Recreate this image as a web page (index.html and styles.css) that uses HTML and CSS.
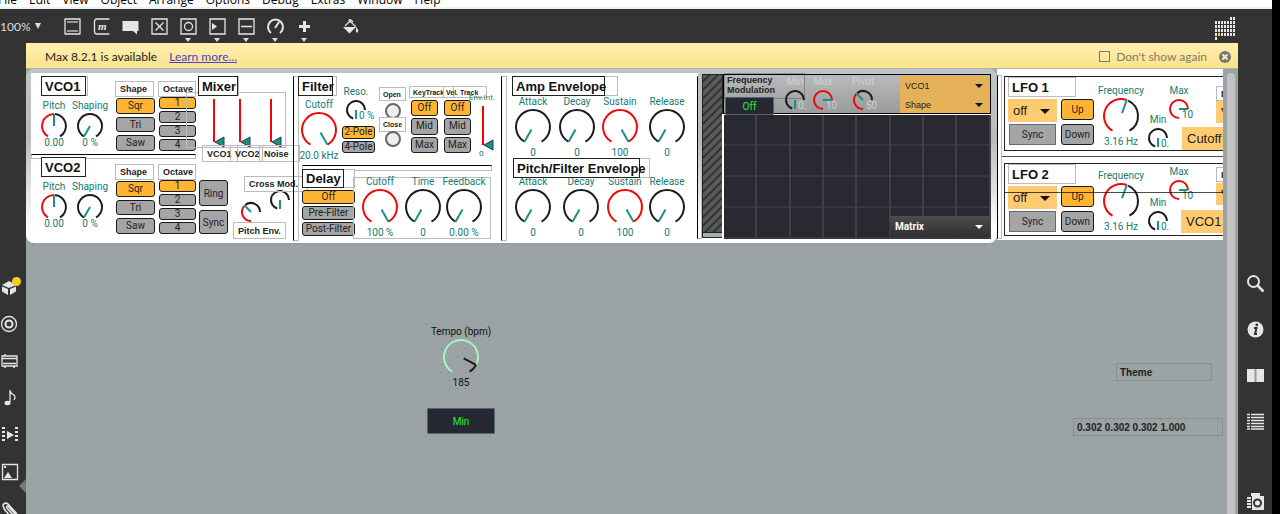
FILE: index.html
```html
<!DOCTYPE html>
<html lang="en">
<head>
<meta charset="utf-8">
<title>Max</title>
<link rel="stylesheet" href="styles.css">
</head>
<body>
<div class="window">
  <nav class="menubar">
    <button>File</button><button>Edit</button><button>View</button><button>Object</button><button>Arrange</button><button>Options</button><button>Debug</button><button>Extras</button><button>Window</button><button>Help</button>
  </nav>

  <header class="toolbar">
    <button class="zoom">100%<svg width="8" height="6" viewBox="0 0 8 6"><path d="M1 0h6L4 6z" fill="#e0e0e0"/></svg></button>
    <div class="tools">
      <button aria-label="Object"><svg viewBox="0 0 17 17"><path d="M1 .5v16M16 .5v16M1 1h15M1 16h15"/><path d="M3 4h11M3 13h11" stroke="#999" stroke-width="2"/></svg></button>
      <button aria-label="Message"><svg viewBox="0 0 17 17"><path d="M16.500 1H4Q1.500 1 1.500 3.500v10Q1.500 16 4 16h12.500"/><text x="5" y="12" class="glyph">m</text></svg></button>
      <button aria-label="Comment"><svg viewBox="0 0 17 17"><path d="M.5 3h16v10H15v3.500L11 13H.5z" class="solid"/></svg></button>
      <button aria-label="Toggle"><svg viewBox="0 0 17 17"><path d="M1 1h15v15H1zM4.500 4.500l8 8M12.500 4.500l-8 8"/></svg></button>
      <button aria-label="Button" class="more"><svg viewBox="0 0 17 17"><path d="M1 1h15v15H1z"/><circle cx="8.500" cy="8.500" r="4"/></svg></button>
      <button aria-label="Number" class="more"><svg viewBox="0 0 17 17"><path d="M1 1h15v15H1z"/><path d="M3 5l5 3.500L3 12z" class="solid"/></svg></button>
      <button aria-label="Slider" class="more"><svg viewBox="0 0 17 17"><path d="M1 1h15v15H1zM3 8.500h11"/></svg></button>
      <button aria-label="Dial" class="more"><svg viewBox="0 0 17 17"><path d="M4 15A7.500 7.500 0 1 1 13 15M8 10l4-6" stroke-width="2"/></svg></button>
      <button aria-label="Add" class="more"><svg viewBox="0 0 17 17"><path d="M8.500 3v11M3 8.500h11" stroke-width="3"/></svg></button>
      <button aria-label="Format" class="format"><svg viewBox="0 0 17 17"><path d="M7 5V3q0-2 2-1l2 2M3 8l5-5 6 6" stroke-width="1.200"/><path d="M1 9h13l-6.500 6.500zM14 9q3 3 2 5-1 1-2 0z" class="solid"/></svg></button>
    </div>
    <button class="grid-toggle" aria-label="Clue grid"><svg width="20" height="23" viewBox="0 0 20 23">
      <g stroke-width="3" stroke-dasharray="2 1" fill="none"><path d="M15 1.500h5M0 5.500h20M0 9.500h20M0 13.500h20M0 17.500h20M0 21.500h2"/></g><path d="M3 16h2v3H3z" fill="#f2cf1d" stroke="none"/></svg></button>
  </header>

  <div class="body">
    <aside class="left-bar">
      <button aria-label="Packages"><svg viewBox="0 0 20 20"><path d="M1 8l7-4 7 4-7 3zM1 9.500l6 2.500v6l-6-3.500zM15 9.500L9 12v6l6-3.500z" class="solid"/><circle cx="15.500" cy="4.500" r="4.500" fill="#f2cf1d" stroke="none"/></svg></button>
      <button aria-label="Audio"><svg viewBox="0 0 20 20"><circle cx="8" cy="10" r="7.500"/><circle cx="8" cy="10" r="3.500" stroke-width="2"/></svg></button>
      <button aria-label="Devices"><svg viewBox="0 0 20 20"><path d="M1 5h15v10H1zM1 7.500h15M2 12.500h13M3 4h2M3 16h2M12 16h2"/></svg></button>
      <button aria-label="Sounds"><svg viewBox="0 0 20 20"><path d="M9 2v12M9 3q1 3 4 4 2 2 0 5"/><ellipse cx="6.500" cy="15" rx="3" ry="2.200" class="solid"/></svg></button>
      <button aria-label="Video"><svg viewBox="0 0 20 20"><path d="M2.500 2v16M15.500 2v16" stroke-width="3" stroke-dasharray="2 2"/><path d="M6 6l7 4-7 4z" class="solid"/></svg></button>
      <button aria-label="Images"><svg viewBox="0 0 20 20"><path d="M1.500 2.500h15v15h-15z"/><path d="M3 16l4-6 4 6zM3 4h2v2H3z" class="solid"/></svg></button>
      <button aria-label="Clips"><svg viewBox="0 0 20 20"><path d="M11 19L4 11q-2-3-2-5 2-3 5-1l9 10M14 18L6 9q-1-2 1-2l9 10" stroke-width="1.600"/></svg></button>
      <span class="drawer-arrow"></span>
    </aside>

    <main class="main">
      <div class="notice">
        <span>Max 8.2.1 is available</span><a href="#">Learn more...</a>
        <label class="dismiss"><input type="checkbox">Don't show again</label>
        <button class="close" aria-label="Close"><svg width="12" height="12" viewBox="0 0 12 12"><circle cx="6" cy="6" r="6" fill="#777"/><path d="M3.500 3.500l5 5M8.500 3.500l-5 5" stroke="#ffedad" stroke-width="2"/></svg></button>
      </div>
      <div class="patcher">
        <div class="canvas" id="canvas"></div>
        <div class="gutter"><div class="thumb"></div></div>
      </div>
    </main>

    <aside class="right-bar">
      <button aria-label="Search"><svg viewBox="0 0 17 17"><circle cx="6.500" cy="6.500" r="5.500" stroke-width="2"/><path d="M10.500 10.500l6 6" stroke-width="2.500"/></svg></button>
      <button aria-label="Inspector"><svg viewBox="0 0 17 17"><circle cx="8.500" cy="8.500" r="8" class="solid"/><path d="M7 7h2.500L8 13h2" stroke="#333" stroke-width="2"/><circle cx="9.800" cy="3.800" r="1.400" fill="#333" stroke="none"/></svg></button>
      <button aria-label="Reference"><svg viewBox="0 0 17 17"><path d="M0 2h8v13H0zM9 2h8v13H9z" class="solid"/><path d="M8.500 2v13" stroke="#999" stroke-width="2"/></svg></button>
      <button aria-label="Console"><svg viewBox="0 0 17 17"><path d="M0 1.500h3M4 1.500h13M0 4.500h3M4 4.500h13M0 7.500h3M4 7.500h13M0 10.500h3M4 10.500h13M0 13.500h3M4 13.500h13M0 16h3M4 16h13" stroke-width="1.700"/></svg></button>
      <button aria-label="Snapshots" class="last"><svg viewBox="0 0 17 17"><path d="M4 0h9v3h4v14H5V3H4zM0 4h4v2H0zM0 7h4v2H0zM0 10h4v2H0zM0 13h4v2H0z" class="solid"/><circle cx="10.500" cy="10" r="3.500" fill="#eee" stroke="#333" stroke-width="2"/></svg></button>
    </aside>
  </div>
</div>
<script src="patch.js"></script>
</body>
</html>
```

FILE: styles.css
```css
* { box-sizing: border-box; }
body { margin: 0; background: #000; height: 100vh; overflow: hidden; font-family: Lato, sans-serif; font-size: 12px; }
button, input, select { font: inherit; color: inherit; margin: 0; padding: 0; }
button { background: none; border: 0; white-space: nowrap; }
svg { display: block; overflow: visible; }

.window { margin-right: 8px; height: 100vh; background: #333; display: flex; flex-direction: column; overflow: hidden; }
.menubar { height: 9px; flex: none; background: #fff; border-bottom: 2px solid #f0f0f0; display: flex; align-items: flex-end; gap: 12px; overflow: hidden; font: 12px/14px "Open Sans", sans-serif; color: #000; }
.menubar button { height: 14px; flex: none; }
.menubar button:first-child { margin-left: -2px; }

.toolbar { height: 34px; flex: none; display: flex; align-items: center; color: #ddd; padding-right: 37px; }
.toolbar svg, .left-bar svg, .right-bar svg { fill: none; stroke: #e6e6e6; stroke-width: 1.3; }
.toolbar .solid, .left-bar .solid, .right-bar .solid { fill: #e6e6e6; stroke: none; }
.glyph { font: italic bold 11px "Liberation Serif", serif; fill: #e6e6e6; stroke: none; }
.zoom { width: 58px; display: flex; align-items: center; gap: 3px; }
.toolbar .zoom svg { stroke: none; }
.tools { display: flex; flex: 1; }
.tools button { width: 29px; height: 34px; display: flex; justify-content: center; align-items: center; position: relative; }
.tools svg { width: 17px; height: 17px; }
.tools .format { margin-left: 17px; }
.more::after { content: ""; position: absolute; bottom: 1px; left: 11px; border: 3px solid transparent; border-top: 4px solid #ddd; border-bottom: 0; }
.grid-toggle { padding-top: 4px; }

.body { flex: 1; display: flex; min-height: 0; }
.left-bar { width: 26px; flex: none; padding-top: 225px; overflow: hidden; position: relative; }
.left-bar button { display: flex; width: 26px; height: 37px; align-items: center; padding-left: 1px; }
.left-bar svg { width: 20px; height: 20px; }
.drawer-arrow { position: absolute; right: 0; top: 436px; border: 7px solid transparent; border-right-color: #777; border-left: 0; }
.right-bar { width: 34px; flex: none; padding-top: 217px; overflow: hidden; }
.right-bar button { display: flex; width: 34px; height: 46px; align-items: center; justify-content: center; }
.right-bar svg { width: 17px; height: 17px; }
.right-bar .last { margin-top: 34px; }

.main { flex: 1; min-width: 0; display: flex; flex-direction: column; }
.notice { height: 26px; flex: none; display: flex; align-items: center; padding: 2px 7px 0 19px; color: #222; background: linear-gradient(#ffefb2, #fbe38b); border-bottom: 1px solid #b5b5b0; }
.notice a { margin-left: 12px; color: #4a3fd0; }
.dismiss { margin-left: auto; display: flex; align-items: center; color: #807c68; }
.dismiss input { appearance: none; width: 11px; height: 11px; border: 1px solid #777; margin-right: 6px; }
.close { margin-left: 12px; }

.patcher { flex: 1; display: flex; min-height: 0; background: #9ba3a4; }
.canvas { flex: 1; min-width: 0; position: relative; overflow: hidden; background: conic-gradient(at 1px 1px, transparent 75%, #788081 0) 7px 7px / 8px 8px; font-family: Roboto, sans-serif; font-size: 10px; }
.gutter { width: 15px; flex: none; padding: 4px 3px 0 4px; }
.thumb { height: 100%; background: #c3c1c2; border-radius: 4px 4px 0 0; }

.obj { position: absolute; }
.back { background: linear-gradient(#bfc4c5, #b8bcbd 40%, #fff 92%); border-radius: 8px; }
.white { background: #fff; }
.frame { border: 1px solid #bbb; }
.over { border: 1px solid rgba(60, 60, 60, .35); }
.box { border: 1px solid #222; }
.rule { border: 1px solid #bbb; border-top: 1px solid #000; }
.post { border: 1px solid #bbb; border-left: 1px solid #000; }
.line { background: rgba(0, 0, 0, .7); }
.hatch { border: 1px solid #222; background: repeating-linear-gradient(135deg, #5a5a5a 0 3px, #333 4px 5px, #5a5a5a 6px); }
.meter { background: #a3afb3; border: 1px solid #222; }
.mod { border: 1px solid #000; background: linear-gradient(#b8babb, #999b9c); }
.modsel { background: #e5b158; }
.matrix { background:
  linear-gradient(90deg, #483c44, #483c44) right top / 2px 100% no-repeat,
  linear-gradient(#3d343d, #3d343d) left bottom / 100% 2px no-repeat, #292932; }

.note { display: flex; align-items: center; padding-left: 4px; font: bold 9px "Liberation Sans", sans-serif; color: #222; border: 1px solid #bbb; background: #fff; white-space: nowrap; }
.note.clear { background: none; }
.note.tiny { font-size: 7px; padding-left: 3px; }
.note.tiny.tight { padding-left: 2px; }
.note.mid { font-size: 10px; padding-left: 3px; background: none; border-color: #8a8f90; }
.note.bare { background: none; border: 0; white-space: pre; line-height: 10px; }
.title { display: flex; align-items: center; padding-left: 3px; margin: 0; font: bold 13px "Liberation Sans", sans-serif; color: #111; border: 1px solid #222; background: #fff; white-space: nowrap; }
.title.light { border-color: #bbb; }

.tabs { display: flex; flex-direction: column; gap: 2px; }
.tabs button { flex: 1; min-height: 0; line-height: 10px; }
.tabs.wide { gap: 3px; }
.btn, .tabs button { color: #222; background: #a5a5a5; border: 1px solid #1a1a1a; border-radius: 3px; display: flex; align-items: center; justify-content: center; }
.btn.on, .tabs .on { background: #ffb532; }
.btn.flat { border: 1px solid #5c6c80; border-radius: 0; }
.btn.dark { border: 1px solid #52627a; border-radius: 1px; background: #272932; color: #1cf03c; }
.ring { border: 2px solid #666; border-radius: 50%; background: #eee; }

.pick select { appearance: none; width: 100%; height: 100%; border: 0; background: #fecb70; padding-left: 5px; font: 13px "Liberation Sans", sans-serif; color: #222; border-radius: 0; }
.pick::after { content: ""; position: absolute; right: 7px; top: 50%; margin-top: -2px; border: 5px solid transparent; border-top-color: #111; border-bottom: 0; }
.pick.small select { font-size: 9px; background: none; }
.pick.small::after { border-width: 4px 4px 0; }
.pick.menu select { font: bold 10px Roboto, sans-serif; color: #fff; background: linear-gradient(#4c4c4c, #303030); }
.pick.menu::after { border-width: 4px 4px 0; border-top-color: #fff; }
.pick.cut::after { display: none; }

.dial { display: flex; flex-direction: column; align-items: center; width: 60px; color: #147b70; line-height: 12px; white-space: nowrap; }
.dial label, .dial output { height: 12px; }
.dial.big output { margin-top: 1px; }
.dial.small output { margin-top: -3px; }
.dial.tiny output { position: absolute; left: 33px; bottom: 0; }
.dial.faint { color: #d0d2d2; }
.dial.ink { color: #111; }
.dial input, .fader input { position: absolute; inset: 0; width: 100%; height: 100%; opacity: 0; }
.fader label, .fader output { position: absolute; color: #147b70; font-size: 8px; line-height: 10px; white-space: nowrap; }
.fader label { left: -13px; top: -13px; }
.fader output { left: -3px; bottom: -14px; }
```

FILE: patch.js
```javascript
// Patch contents: every entry is placed in window coordinates of the patcher.
const ORIGIN = { x: 26, y: 69 };
const canvas = document.getElementById('canvas');
let serial = 0;

function put(tag, cls, x, y, w, h, html = '') {
  const el = document.createElement(tag);
  el.className = 'obj ' + cls;
  el.style.left = x - ORIGIN.x + 'px';
  el.style.top = y - ORIGIN.y + 'px';
  if (w) el.style.width = w + 'px';
  if (h) el.style.height = h + 'px';
  el.innerHTML = html;
  canvas.append(el);
  return el;
}
const shape = (cls, x, y, w, h) => put('div', cls, x, y, w, h);
const note = (text, x, y, w, h, cls = '') => put('div', 'note ' + cls, x, y, w, h, text);
const button = (text, x, y, w, h, cls = '') => put('button', 'btn ' + cls, x, y, w, h, text);
function title(text, x, y, w, h, outer) {
  if (outer) shape('frame white', x, y, outer, h);
  put('h2', 'title', x, y, w, h, text);
}
function tabs(names, x, y, w, h, cls = '') {
  put('div', 'tabs ' + cls, x, y, w, h, names.map((n, i) => `<button class="${i ? '' : 'on'}">${n}</button>`).join(''));
}
function pick(text, x, y, w, h, cls = '') {
  put('div', 'pick ' + cls, x, y, w, h, `<select aria-label="${text} menu"><option>${text}</option></select>`);
}

const SIZES = {
  big: { r: 17, half: 19, from: 30, sweep: 300, inner: 3 },
  small: { r: 12, half: 14, from: 30, sweep: 300, inner: 0 },
  tiny: { r: 9, half: 12, from: 0, sweep: 270, inner: 0 }
};
function point(angle, r) {
  const a = angle * Math.PI / 180;
  return `${(-Math.sin(a) * r).toFixed(2)} ${(Math.cos(a) * r).toFixed(2)}`;
}
function arc(a, b, r, color) {
  if (b - a < 2) return '';
  return `<path d="M${point(a, r)}A${r} ${r} 0 ${b - a > 180 ? 1 : 0} 1 ${point(b, r)}" stroke="${color}"/>`;
}
function dial(size, cx, cy, v, label, value, cls = '') {
  const s = SIZES[size], at = s.from + s.sweep * v, end = s.from + s.sweep, id = 'd' + serial++;
  const ink = cls === 'ink';
  const gap = v > 0 && v < 1 && !ink ? 5 : 0;
  const start = size === 'tiny' && v === 0 ? 18 : s.from;
  put('div', `dial ${size} ${cls}`, cx - 30, cy - s.half - 12, 0, 0,
    `<label for="${id}">${label}</label>
     <svg width="${s.half * 2}" height="${s.half * 2}" viewBox="${-s.half} ${-s.half} ${s.half * 2} ${s.half * 2}" fill="none" stroke-width="2">
     ${arc(start, at, s.r, ink ? '#a8f5bc' : '#f00808')}${arc(Math.max(at + gap, start), end, s.r, '#1c1c1c')}
     <path d="M${point(at, s.inner)}L${point(at, s.r)}" stroke="${ink ? '#1c1c1c' : '#17947f'}"/></svg>
     <output for="${id}">${value}</output><input id="${id}" type="range" value="${Math.round(v * 100)}" aria-label="${label || 'Amount'}">`);
}
function fader(x, y, h, label = '', value = '') {
  const id = 'f' + serial++;
  put('div', 'fader', x, y, 12, h,
    `<svg width="12" height="${h}"><path d="M1 0V${h}" stroke="#f00808" stroke-width="2"/><path d="M2 ${h}l9-5v10z" fill="#17947f" stroke="#335"/></svg>
     <label for="${id}">${label}</label><output>${value}</output><input id="${id}" type="range" value="0" aria-label="${label || 'Level'}">`);
}

shape('back', 26, 69, 971, 174);
shape('white', 31, 73, 667, 168);

// Oscillators
[[0, 'VCO1'], [81, 'VCO2']].forEach(([dy, name]) => {
  const low = dy > 0;
  if (low) shape('rule', 31, 154, 165, 5);
  title(name, 41, 76 + dy, 45, 20, low ? 0 : 47);
  dial('small', 54, 126 + dy, 0.5, 'Pitch', '0.00');
  dial('small', 90, 126 + dy, 0, 'Shaping', '0 %');
  note('Shape', 115, 81 + (low ? 83 : 0), 39, 16);
  note('Octave', 158, 81 + (low ? 83 : 0), 38, 16, 'clear');
  tabs(['Sqr', 'Tri', 'Saw'], 116, 98 + (low ? 83 : 0), 39, 53, 'wide');
  tabs(['1', '2', '3', '4'], 159, 97 + (low ? 83 : 0), 37, 54);
});

// Mixer
shape('frame', 186, 92, 100, 56);
title('Mixer', 198, 76, 40, 20, 41);
fader(213, 99, 43); fader(239, 99, 43); fader(270, 99, 43);
note('VCO1', 202, 145, 36, 17, 'clear');
note('VCO2', 230, 145, 33, 17, 'clear');
note('Noise', 259, 145, 41, 17, 'clear');
button('Ring', 199, 180, 29, 26);
button('Sync', 199, 210, 29, 24);
dial('tiny', 251, 212, 0.5, '', '');
dial('tiny', 280, 200, 0, '', '');
note('Cross Mod.', 244, 176, 64, 16, 'clear');
note('Pitch Env.', 233, 222, 53, 17);
shape('post', 293, 76, 6, 165);

// Filter
title('Filter', 298, 76, 35, 20, 39);
dial('big', 319, 130, 1, 'Cutoff', '20.0 kHz');
dial('tiny', 356, 110, 0, 'Reso.', '0 %');
tabs(['2-Pole', '4-Pole'], 342, 126, 33, 27);
note('Open', 379, 87, 27, 14, 'tiny');
shape('ring', 385, 103, 16, 16);
note('Close', 379, 117, 27, 15, 'tiny');
shape('ring', 385, 131, 16, 16);
note('KeyTrack', 409, 86, 45, 12, 'tiny clear');
note('Vel. Track', 443, 86, 44, 12, 'tiny tight clear');
tabs(['Off', 'Mid', 'Max'], 411, 100, 27, 53);
tabs(['Off', 'Mid', 'Max'], 444, 100, 27, 53);
fader(482, 106, 39, 'Env.Int.', '0');
shape('rule', 302, 165, 190, 6);

// Delay
title('Delay', 302, 169, 42, 19, 53);
tabs(['Off', 'Pre-Filter', 'Post-Filter'], 302, 190, 53, 46);
shape('frame', 353, 177, 138, 62);
dial('big', 380, 207, 1, 'Cutoff', '100 %');
dial('big', 423, 207, 0, 'Time', '0');
dial('big', 464, 207, 0, 'Feedback', '0.00 %');
shape('post', 501, 76, 6, 165);

// Envelopes
title('Amp Envelope', 512, 76, 93, 20, 106);
[[533, 'Attack'], [577, 'Decay'], [620, 'Sustain'], [667, 'Release']].forEach(([x, n]) =>
  dial('big', x, 127, n === 'Sustain' ? 1 : 0, n, n === 'Sustain' ? '100' : '0'));
[[533, 'Attack'], [581, 'Decay'], [625, 'Sustain'], [667, 'Release']].forEach(([x, n]) =>
  dial('big', x, 207, n === 'Sustain' ? 1 : 0, n, n === 'Sustain' ? '100' : '0'));
title('Pitch/Filter Envelope', 513, 158, 127, 20, 137);
shape('post', 697, 76, 5, 163);

// Modulation matrix
shape('hatch', 702, 74, 21, 159);
shape('meter', 702, 232, 21, 6);
shape('white', 722, 114, 2, 124);
const COLS = 8, ROWS = 4, CELL_W = 100 / 3, CELL_H = 31;
shape('white', 724, 114, 267, 124);
for (let row = 0; row < ROWS; row++) {
  for (let col = 0; col < COLS; col++) {
    const left = Math.round(col * CELL_W), right = Math.round((col + 1) * CELL_W);
    shape('matrix', 724 + left, 115 + row * CELL_H, right - left, CELL_H);
  }
}
shape('mod', 723, 74, 268, 40);
shape('modsel', 900, 76, 90, 37);
note('Frequency\nModulation', 723, 75, 80, 20, 'bare');
shape('over', 724, 73, 81, 26);
button('Off', 725, 97, 49, 18, 'dark');
dial('tiny', 795, 100, 0, 'Min', '0.', 'faint');
dial('tiny', 823, 100, 1, 'Max', '10', 'faint');
dial('tiny', 863, 100, 0.5, 'Pivot', '50', 'faint');
pick('VCO1', 900, 77, 90, 18, 'small');
pick('Shape', 900, 96, 90, 17, 'small');
pick('Matrix', 890, 216, 100, 21, 'menu');

// Low-frequency oscillators
shape('white', 997, 69, 260, 171);
shape('post', 997, 75, 5, 164);
shape('line', 1002, 156, 260, 1);
[[0, 'LFO 1', 'Cutoff', 0], [87, 'LFO 2', 'VCO1', 82]].forEach(([dy, name, dest, my]) => {
  shape('box', 1004, 76 + dy, 260, dy ? 73 : 75);
  put('h2', 'title light', 1008, 77 + dy, 68, 20, name);
  pick('off', 1008, 99 + dy, 49, 23);
  button('Up', 1061, 99 + dy, 33, 21, 'on');
  button('Sync', 1009, 124 + dy, 47, 21, 'flat');
  button('Down', 1061, 124 + dy, 33, 21);
  dial('big', 1121, 116 + (dy ? 85 : 0), 0.566, 'Frequency', '3.16 Hz');
  dial('tiny', 1179, 109 + (dy ? 81 : 0), 1, 'Max', '10');
  dial('tiny', 1158, 138 + (dy ? 83 : 0), 0, 'Min', '0.');
  note('D', 1216, 86 + (dy ? 81 : 0), 40, 15);
  pick('VCO1', 1216, 101 + my, 60, 22, 'cut');
  pick(dest, 1182 - (dy ? 1 : 0), 127 + (dy ? 83 : 0), 80, 23, 'cut');
});
shape('line', 1004, 192, 260, 1);

// Global controls
dial('big', 461, 357, 0.893, 'Tempo (bpm)', '185', 'ink');
button('Min', 427, 408, 68, 26, 'dark');
note('Theme', 1116, 363, 96, 18, 'mid');
note('0.302 0.302 0.302 1.000', 1073, 418, 150, 18, 'mid');
```
